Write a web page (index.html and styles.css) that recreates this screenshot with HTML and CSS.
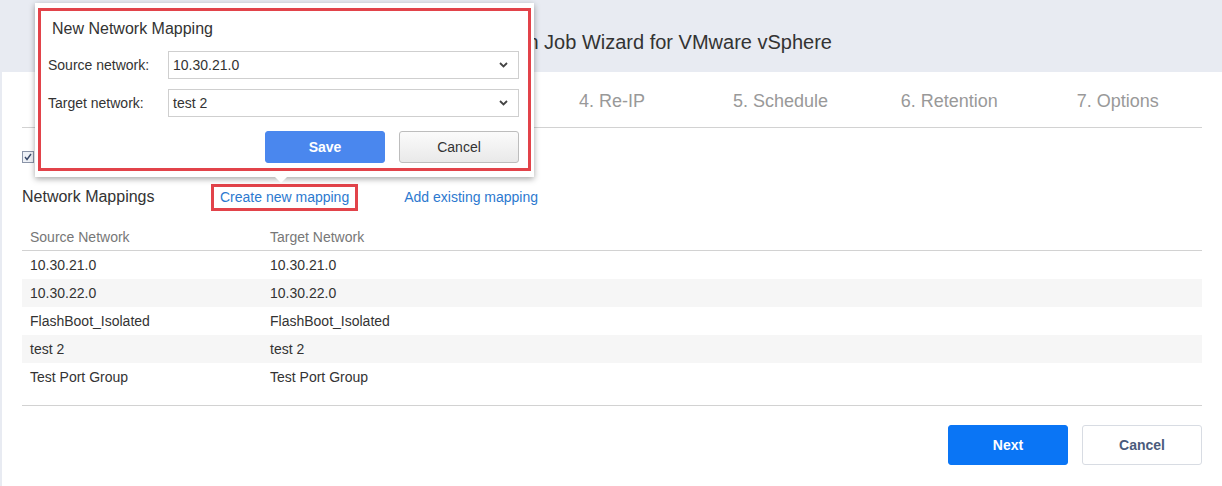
FILE: index.html
```html
<!DOCTYPE html>
<html>
<head>
<meta charset="utf-8">
<link rel="stylesheet" href="styles.css">
</head>
<body>
<div class="page">
  <header class="topbar">
    <h1 class="title">New Replication Job Wizard for VMware vSphere</h1>
  </header>
  <main class="panel">
    <nav class="steps">
      <div class="step">1. Source</div>
      <div class="step">2. Destination</div>
      <div class="step">3. Networks</div>
      <div class="step">4. Re-IP</div>
      <div class="step">5. Schedule</div>
      <div class="step">6. Retention</div>
      <div class="step">7. Options</div>
    </nav>
    <div class="check-row">
      <span class="checkbox"><svg width="10" height="10" viewBox="0 0 10 10"><path d="M2 5 L4 7.5 L8 2" fill="none" stroke="#3a4a6a" stroke-width="1.4"/></svg></span>
      <span class="check-label">Enable network mapping</span>
    </div>
    <div class="mappings-head">
      <span class="section-title">Network Mappings</span>
      <span class="link link-boxed">Create new mapping</span>
      <span class="link">Add existing mapping</span>
    </div>
    <div class="table">
      <div class="thead">
        <div class="cell">Source Network</div>
        <div class="cell">Target Network</div>
      </div>
      <div class="row"><div class="cell">10.30.21.0</div><div class="cell">10.30.21.0</div></div>
      <div class="row alt"><div class="cell">10.30.22.0</div><div class="cell">10.30.22.0</div></div>
      <div class="row"><div class="cell">FlashBoot_Isolated</div><div class="cell">FlashBoot_Isolated</div></div>
      <div class="row alt"><div class="cell">test 2</div><div class="cell">test 2</div></div>
      <div class="row"><div class="cell">Test Port Group</div><div class="cell">Test Port Group</div></div>
    </div>
    <div class="footer">
      <button class="btn btn-next">Next</button>
      <button class="btn btn-cancel">Cancel</button>
    </div>
  </main>

  <div class="popup">
    <div class="popup-inner">
      <div class="popup-title">New Network Mapping</div>
      <div class="form-row">
        <label class="form-label">Source network:</label>
        <div class="select"><span>10.30.21.0</span><svg class="chev" width="9" height="6" viewBox="0 0 9 6"><path d="M1 1 L4.5 4.5 L8 1" fill="none" stroke="#444" stroke-width="1.8"/></svg></div>
      </div>
      <div class="form-row">
        <label class="form-label">Target network:</label>
        <div class="select"><span>test 2</span><svg class="chev" width="9" height="6" viewBox="0 0 9 6"><path d="M1 1 L4.5 4.5 L8 1" fill="none" stroke="#444" stroke-width="1.8"/></svg></div>
      </div>
      <div class="popup-actions">
        <button class="pbtn pbtn-save">Save</button>
        <button class="pbtn pbtn-cancel">Cancel</button>
      </div>
    </div>
    <div class="arrow"></div>
  </div>
</div>
</body>
</html>
```

FILE: styles.css
```css
* { box-sizing: border-box; }
html, body { margin: 0; padding: 0; }
body {
  font-family: "Liberation Sans", Arial, sans-serif;
  background: #e8ebf2;
  color: #333;
  width: 1222px;
  height: 486px;
  overflow: hidden;
}
.page { position: relative; height: 486px; }
.topbar {
  height: 72px;
  display: flex;
  align-items: center;
  justify-content: center;
  padding-top: 12px;
}
.title {
  margin: 0;
  font-size: 20px;
  font-weight: normal;
  color: #333;
  padding-left: 4px;
}
.panel {
  background: #fff;
  margin-left: 2px;
  height: 414px;
  padding: 0 20px 0 20px;
}
.steps {
  display: flex;
  height: 56px;
  border-bottom: 1px solid #d2d2d2;
  align-items: center;
}
.step {
  flex: 1;
  text-align: center;
  font-size: 18px;
  color: #999;
  white-space: nowrap;
  padding-top: 3px;
}
.check-row {
  display: flex;
  align-items: center;
  height: 20px;
  margin-top: 19px;
  gap: 8px;
}
.checkbox {
  width: 12px;
  height: 12px;
  border: 1px solid #8a94a8;
  background: #eef1f6;
  display: flex;
  align-items: center;
  justify-content: center;
}
.checkbox svg { display: block; }
.check-label { font-size: 14px; }
.mappings-head {
  display: flex;
  align-items: center;
  height: 28px;
  margin-top: 16px;
}
.section-title {
  font-size: 16px;
  color: #333;
  width: 189px;
}
.link {
  font-size: 14px;
  color: #2c79cf;
}
.link-boxed {
  border: 3px solid #e2434a;
  padding: 2px 6px 3px 6px;
  margin-right: 46px;
}
.table { margin-top: 12px; }
.thead {
  display: flex;
  height: 28px;
  align-items: center;
  border-bottom: 1px solid #d2d2d2;
  color: #777;
  font-size: 14px;
}
.row {
  display: flex;
  height: 28px;
  align-items: center;
  font-size: 14px;
  color: #333;
}
.row.alt { background: #f6f6f6; }
.cell {
  width: 240px;
  padding-left: 8px;
}
.table::after {
  content: "";
  display: block;
  margin-top: 14px;
  border-bottom: 1px solid #d2d2d2;
}
.footer {
  display: flex;
  justify-content: flex-end;
  gap: 14px;
  margin-top: 19px;
}
.btn {
  width: 120px;
  height: 40px;
  font-family: "Liberation Sans", Arial, sans-serif;
  font-size: 14px;
  font-weight: bold;
  border-radius: 3px;
  cursor: pointer;
}
.btn-next {
  background: #0a75f5;
  color: #fff;
  border: 1px solid #0a75f5;
}
.btn-cancel {
  background: #fff;
  color: #4a5b7c;
  border: 1px solid #d8dce3;
}

/* popup overlay */
.popup {
  position: absolute;
  left: 35px;
  top: 3px;
  width: 499px;
  height: 174px;
  background: #fff;
  box-shadow: 0 2px 6px rgba(0,0,0,0.35);
  padding: 5px 3px 6px 3px;
}
.popup-inner {
  border: 3px solid #e2434a;
  height: 163px;
  padding: 6px 9px 0 7px;
}
.popup-title {
  font-size: 16px;
  color: #333;
  margin-left: 4px;
  height: 28px;
  line-height: 24px;
}
.form-row {
  display: flex;
  align-items: center;
  height: 28px;
  margin-top: 6px;
}
.form-row + .form-row { margin-top: 10px; }
.form-label {
  width: 120px;
  font-size: 14px;
  color: #333;
}
.select {
  flex: 1;
  height: 28px;
  border: 1px solid #cfcfcf;
  display: flex;
  align-items: center;
  justify-content: space-between;
  padding: 0 10px 0 4px;
  font-size: 14px;
  color: #333;
}
.chev { display: block; }
.popup-actions {
  display: flex;
  justify-content: flex-end;
  gap: 14px;
  margin-top: 14px;
}
.pbtn {
  width: 120px;
  height: 32px;
  font-family: "Liberation Sans", Arial, sans-serif;
  font-size: 14px;
  border-radius: 3px;
}
.pbtn-save {
  background: #4a87ee;
  border: 1px solid #4a87ee;
  color: #fff;
  font-weight: bold;
}
.pbtn-cancel {
  background: linear-gradient(#fbfbfb, #e9e9e9);
  border: 1px solid #bdbdbd;
  color: #333;
}
.arrow {
  position: absolute;
  left: 240px;
  bottom: -6px;
  width: 0;
  height: 0;
  border-left: 6px solid transparent;
  border-right: 6px solid transparent;
  border-top: 6px solid #fff;
}
```
